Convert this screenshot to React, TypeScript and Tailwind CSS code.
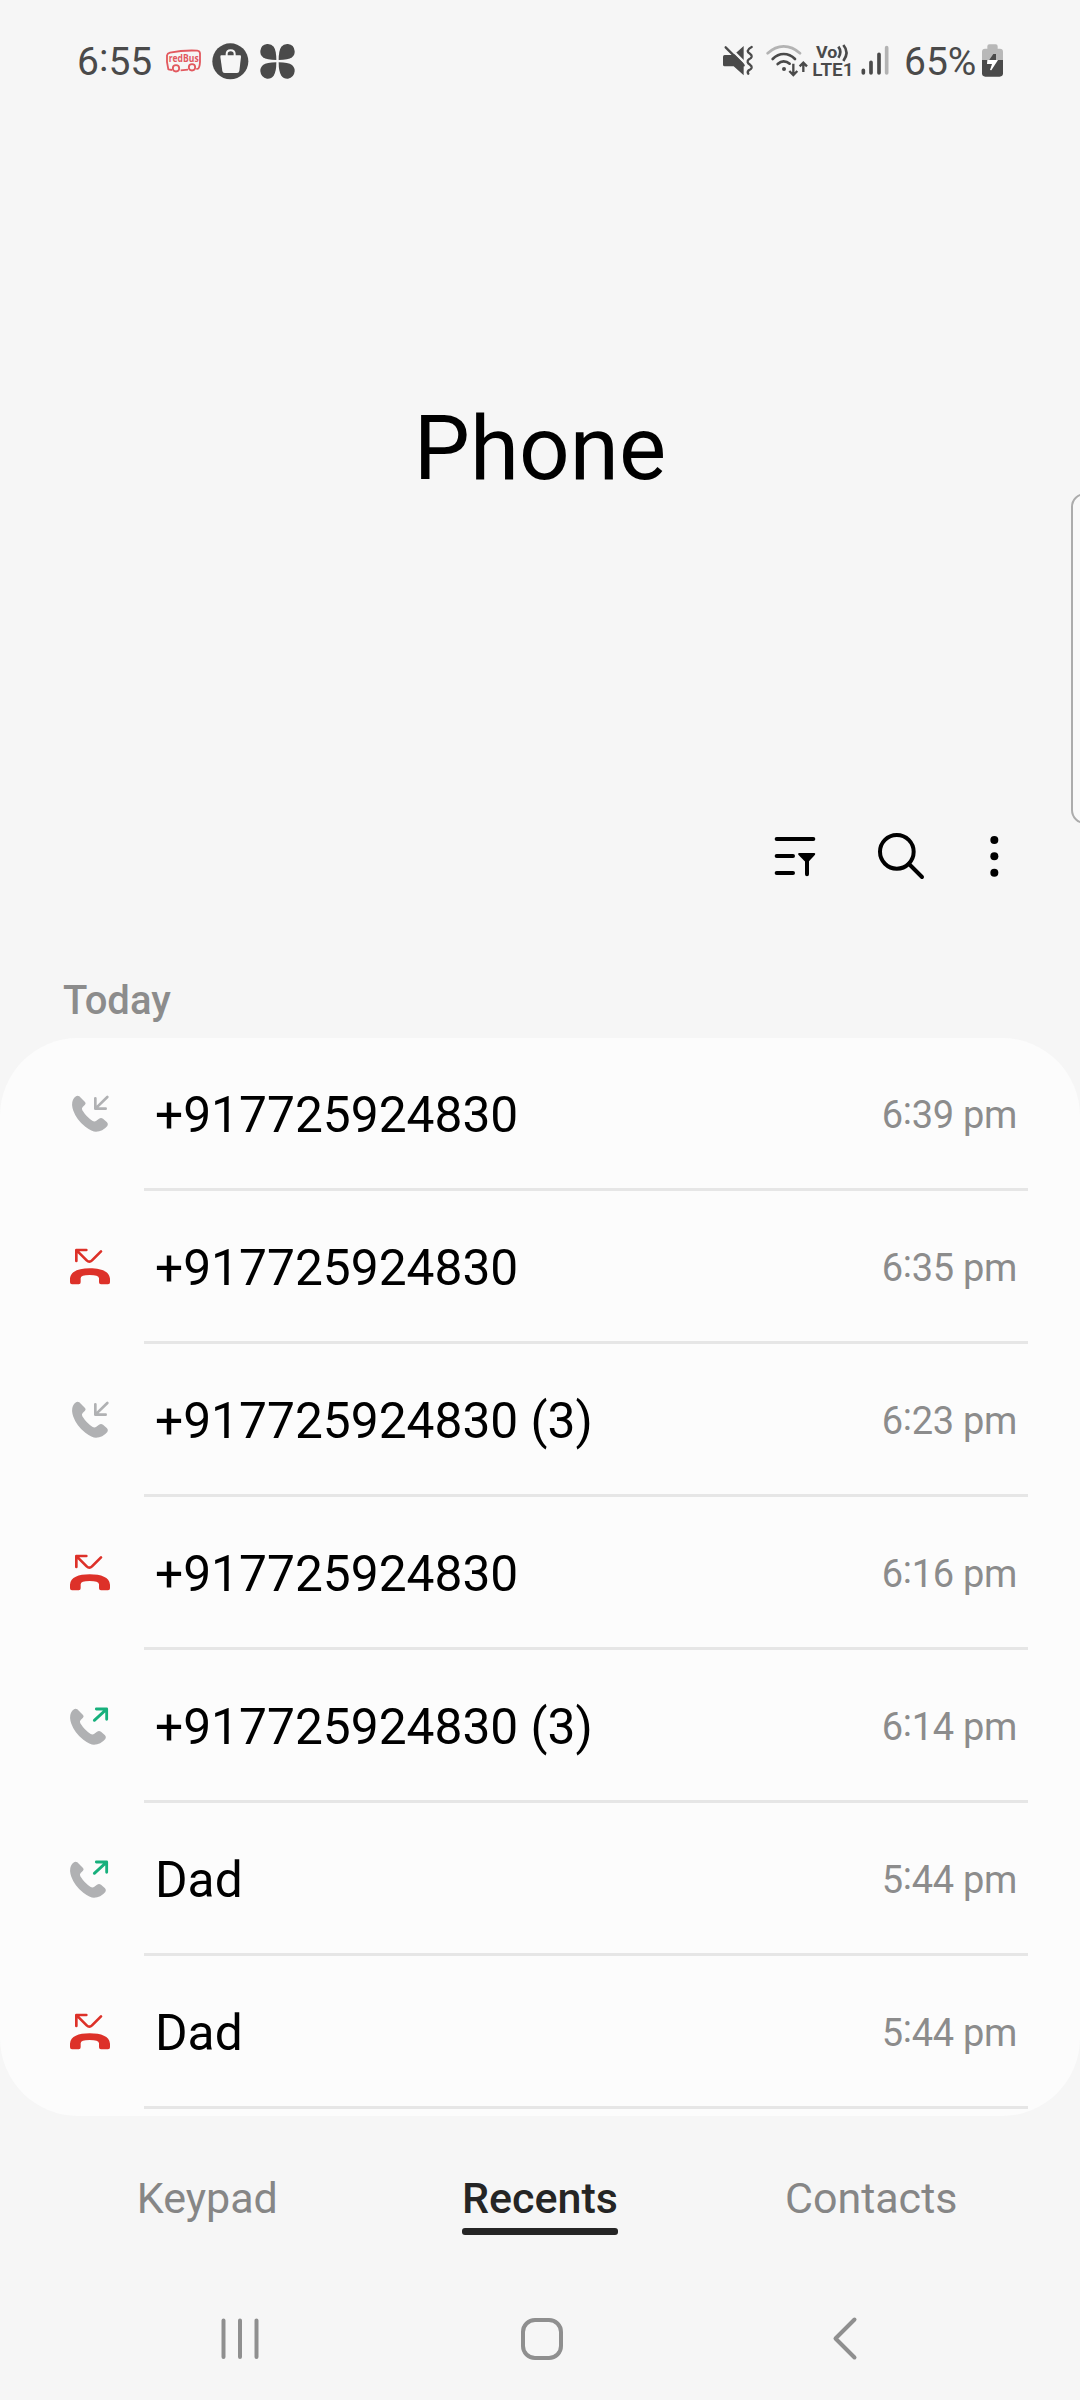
import React from "react";

type CallKind = "incoming" | "missed" | "outgoing";

const CALLS: { kind: CallKind; name: string; time: string }[] = [
  { kind: "incoming", name: "+917725924830", time: "6:39 pm" },
  { kind: "missed", name: "+917725924830", time: "6:35 pm" },
  { kind: "incoming", name: "+917725924830 (3)", time: "6:23 pm" },
  { kind: "missed", name: "+917725924830", time: "6:16 pm" },
  { kind: "outgoing", name: "+917725924830 (3)", time: "6:14 pm" },
  { kind: "outgoing", name: "Dad", time: "5:44 pm" },
  { kind: "missed", name: "Dad", time: "5:44 pm" },
];

const HANDSET =
  "M48 49Q53 46 58 49L75 66Q79 70 75 74L68 81Q64 85 67 91Q80 112 98 123Q104 126 109 122L117 116Q123 112 129 116L141 127Q146 132 142 138Q128 155 108 155Q96 155 76 140Q50 120 40 92Q33 72 39 59Q42 53 48 49Z";

/** Clock text whose colon is centred on the height of the digits. */
function Time({ value }: { value: string }) {
  const [hours, rest] = value.split(":");
  return (
    <>
      {hours}
      <span className="relative -top-1">:</span>
      {rest}
    </>
  );
}

function CallIcon({ kind }: { kind: CallKind }) {
  return (
    <svg className="mb-1.5 h-[60px] w-[60px] shrink-0" viewBox="0 0 180 180" fill="none" strokeLinecap="round" strokeLinejoin="round">
      {kind === "incoming" && (
        <>
          <path d={HANDSET} fill="#b0b1b3" />
          <path d="M106 55V86H137M107 85L142 51" stroke="#b0b1b3" strokeWidth="8" />
        </>
      )}
      {kind === "outgoing" && (
        <>
          <path d={HANDSET} transform="translate(-6 3)" fill="#b0b1b3" />
          <path d="M109 51H140V82M139 52L103 85" stroke="#17b07c" strokeWidth="8.5" />
        </>
      )}
      {kind === "missed" && (
        <g transform="translate(0 -9)">
          <path d="M49 93V60H79M50 61L80 91Q88 99 96 91L123 64" stroke="#dd3129" strokeWidth="8" />
          <path
            d="M30 157V146C32 124 55 115 89 115C124 115 148 124 150 146V157Q150 163 144 163H123Q117 163 117 157V145Q116 135 89 135Q62 135 62 145V157Q62 163 56 163H36Q30 163 30 157Z"
            fill="#dd3129"
          />
        </g>
      )}
    </svg>
  );
}

function StatusBar() {
  return (
    <div className="mt-[30px] flex h-16 items-center text-[39px] leading-[64px] text-[#4a4a4a]">
      <span className="ml-[77px] w-[88px]">
        <Time value="6:55" />
      </span>
      <svg className="h-16 w-[37px]" viewBox="315 0 111 192" fill="none" stroke="#e2595f" strokeWidth="5.5">
        <path d="M336 120L325 118Q319 96 321 76Q322 70 330 68Q370 60 412 62Q419 63 420 70V96Q419 113 414 116L409 117M384 119L362 121" strokeLinejoin="round" />
        <circle cx="348" cy="115" r="9.500" />
        <circle cx="396" cy="112" r="9.500" />
        <text x="326" y="97" fontSize="29" fontWeight="700" textLength="90" lengthAdjust="spacingAndGlyphs" fill="#e2595f" stroke="none" className="font-['Open_Sans',sans-serif]">redBus</text>
      </svg>
      <svg className="ml-[9px] h-16 w-[39px]" viewBox="453 0 117 192">
        <circle cx="511" cy="94" r="54" fill="#4a4a4a" />
        <path d="M484 76H540Q543 76 543 80L538 123Q537 129 531 129H494Q488 129 487 123L481 80Q481 76 484 76Z" fill="#f6f6f6" />
        <path d="M500 78V72Q500 61 512 61Q524 61 524 72V78" fill="none" stroke="#f6f6f6" strokeWidth="6" />
      </svg>
      <svg className="ml-[9px] h-16 w-[37px]" viewBox="597 0 111 192" fill="#4a4a4a">
        <path d="M649 90Q620 90 609 82Q600 74 601 63Q603 44 621 42Q634 41 641 50Q649 61 649 90Z" />
        <path d="M656 90Q685 90 696 82Q705 74 704 63Q702 44 684 42Q671 41 664 50Q656 61 656 90Z" />
        <path d="M649 97Q620 97 609 105Q600 113 601 124Q603 143 621 146Q634 147 641 137Q649 126 649 97Z" />
        <path d="M656 97Q685 97 696 105Q705 113 704 124Q702 143 684 146Q671 147 664 137Q656 126 656 97Z" />
      </svg>

      <svg className="ml-[426px] h-16 w-8" viewBox="66 0 96 192" fill="none">
        <path d="M131 48V136L101 109H74Q69 109 69 104V80Q69 75 74 75H101Z" fill="#4a4a4a" />
        <path d="M80 44L140 104" stroke="#f6f6f6" strokeWidth="7" />
        <path d="M77 52L131 106" stroke="#4a4a4a" strokeWidth="7" strokeLinecap="round" />
        <path d="M155 51Q145 56 143 63Q143 67 150 71Q156 75 155 80Q154 84 147 88Q142 91 143 97Q144 101 150 104Q156 108 155 113Q154 117 146 121Q141 126 145 131" stroke="#4a4a4a" strokeWidth="7" strokeLinecap="round" />
      </svg>
      <svg className="ml-3 h-16 w-[43px]" viewBox="198 0 129 192" fill="none" strokeWidth="8" strokeLinecap="round">
        <path d="M203 70Q225 49 251 49Q278 49 300 70" stroke="#b3b3b3" />
        <path d="M218 87Q233 72 251 72Q270 72 285 87" stroke="#4a4a4a" />
        <path d="M233 102Q242 94 251 94Q261 94 269 101" stroke="#4a4a4a" />
        <circle cx="252" cy="117" r="6" fill="#4a4a4a" />
        <path d="M280 101V134M268 123L280 135L292 123M310 126V100M299 109L310 98L321 109" stroke="#4a4a4a" strokeWidth="7" strokeLinecap="butt" />
      </svg>
      <svg className="ml-[3px] h-16 w-10 overflow-visible" viewBox="336 0 120 192" fill="#4a4a4a">
        <text x="348" y="83" fontSize="49" fontWeight="700" textLength="64" lengthAdjust="spacingAndGlyphs">Vo</text>
        <text x="337" y="138" fontSize="54" fontWeight="600" textLength="124" lengthAdjust="spacingAndGlyphs">LTE1</text>
        <path d="M415 50Q427 66 415 83M430 45Q449 67 430 93" fill="none" stroke="#4a4a4a" strokeWidth="8" />
      </svg>
      <svg className="ml-2 h-16 w-[30px]" viewBox="480 0 90 192" strokeWidth="11" strokeLinecap="round" stroke="#4a4a4a">
        <path d="M490 121V129M513 97V129M537 73V129" />
        <path d="M560 53V129" stroke="#b3b3b3" />
      </svg>
      <span className="ml-[14px] w-[77px]">65%</span>
      <svg className="h-16 w-[23px]" viewBox="843 0 69 192">
        <path d="M846 91V65Q846 56 855 56H862V49Q862 43 868 43H887Q893 43 893 49V56H900Q909 56 909 65V91Z" fill="#b8b8b8" />
        <path d="M846 90H909V130Q909 140 899 140H856Q846 140 846 130Z" fill="#4a4a4a" />
        <path d="M880 72L863 97V90H888V72Z" fill="#4a4a4a" />
        <path d="M862 90H894L874 121L870 120L876 102H861Z" fill="#fff" />
      </svg>
    </div>
  );
}

function Toolbar() {
  return (
    <div className="flex h-[110px] items-center">
      <svg className="ml-[770px] h-[110px] w-[50px]" viewBox="90 0 150 330" fill="none" stroke="#000" strokeWidth="12" strokeLinecap="round">
        <path d="M110 117H220M110 168H159M110 219H159M201 180V223" />
        <path d="M177 159H223Q227 160 225 164L207 184H194L175 164Q173 160 177 159Z" fill="#000" stroke="none" />
      </svg>
      <svg className="ml-[54px] h-[110px] w-[52px]" viewBox="402 0 156 330" fill="none" stroke="#000" strokeWidth="12" strokeLinecap="round">
        <circle cx="470.500" cy="155.500" r="50.500" />
        <path d="M507 192L546 231" />
      </svg>
      <svg className="ml-[58px] h-[110px] w-5" viewBox="732 0 60 330">
        <circle cx="763" cy="120" r="12" />
        <circle cx="763" cy="169" r="12" />
        <circle cx="763" cy="218" r="12" />
      </svg>
    </div>
  );
}

export default function App() {
  return (
    <div className="relative flex h-[2400px] w-[1080px] flex-col overflow-hidden bg-[#f6f6f6] font-[Roboto,sans-serif] text-black">
      <StatusBar />
      <h1 className="mt-[295px] text-center text-[89px] leading-[120px]">Phone</h1>
      <div className="mt-[291px]">
        <Toolbar />
      </div>
      <h2 className="mt-[61px] h-[67px] pl-[63px] text-[40px] leading-[60px] font-medium text-[#8c8c8c]">Today</h2>

      <main className="h-[1078px] overflow-hidden rounded-[78px] bg-[#fcfcfc]">
        {CALLS.map((call, i) => (
          <div key={i} className="flex h-[153px] flex-col">
            <div className="flex flex-1 items-center pr-[63px] pl-[60px]">
              <CallIcon kind={call.kind} />
              <span className="mt-1 ml-[35px] flex-1 text-[49.7px] leading-[60px]">{call.name}</span>
              <span className="mt-[3px] text-[38px] leading-[60px] tracking-[-0.3px] text-[#8c8c8c]">
                <Time value={call.time} />
              </span>
            </div>
            <div className="mr-[52px] ml-[144px] h-[3px] bg-[#e6e6e6]" />
          </div>
        ))}
      </main>

      <nav className="mt-[52px] grid h-[67px] grid-cols-3 px-[41px] text-[43px] leading-[60px] text-[#868686]">
        <span className="text-center">Keypad</span>
        <span className="flex flex-col items-center font-medium text-[#252525]">
          Recents
          <span className="h-[7px] w-[156px] shrink-0 rounded-[3px] bg-[#252525]" />
        </span>
        <span className="pr-[3px] text-center">Contacts</span>
      </nav>

      <div className="mt-[75px] flex h-[56px] items-center">
        <svg className="ml-[210px] h-[56px] w-[60px]" viewBox="0 0 60 56" stroke="#8f8f8f" strokeWidth="4" strokeLinecap="round">
          <path d="M13.500 10.500V47M30 10.500V47M46.500 10.500V47" />
        </svg>
        <svg className="ml-[242px] h-[56px] w-[60px]" viewBox="0 0 60 56" fill="none" stroke="#8f8f8f" strokeWidth="4">
          <rect x="11" y="10" width="38" height="38" rx="12" />
        </svg>
        <svg className="ml-[242px] h-[56px] w-[60px]" viewBox="0 0 60 56" fill="none" stroke="#8f8f8f" strokeWidth="4" strokeLinecap="round" strokeLinejoin="round">
          <path d="M40.500 9.500L21.500 28.500L40.500 47.500" />
        </svg>
      </div>

      {/* edge panel handle */}
      <div className="absolute top-[493px] left-[1071px] h-[331px] w-[40px] rounded-[14px] border-2 border-[#acacac] bg-[#f9f9f9]" />
    </div>
  );
}
